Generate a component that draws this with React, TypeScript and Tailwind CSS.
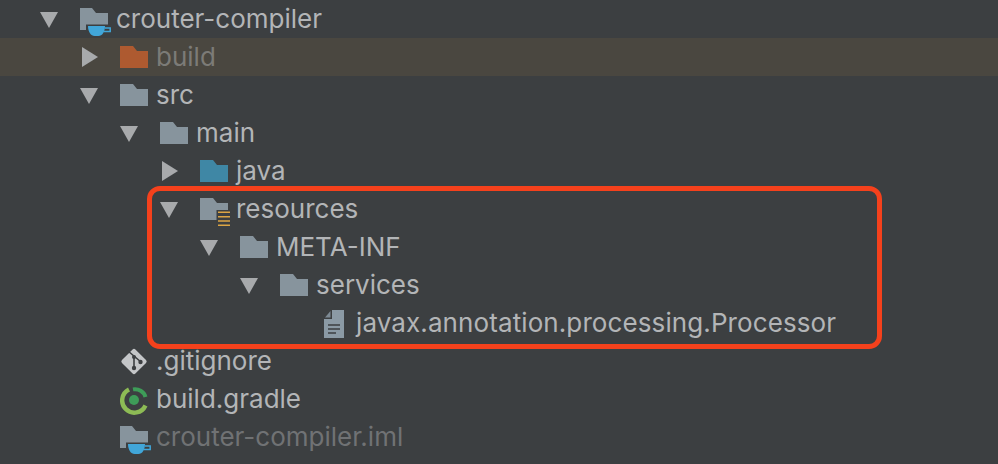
import React from "react";

const Arrow = ({ open }: { open: boolean }) => (
  <svg width="20" height="20" viewBox="0 0 20 20" className="shrink-0">
    {open ? (
      <polygon points="0,3 18,3 9,19" fill="#a8aaac" />
    ) : (
      <polygon points="2,0 18,10 2,20" fill="#a8aaac" />
    )}
  </svg>
);

const Folder = ({ color = "#87949d" }: { color?: string }) => (
  <svg width="28" height="22" viewBox="0 0 28 22" className="shrink-0">
    <path d="M0 0H13L17 5H28V22H0Z" fill={color} />
  </svg>
);

const ModuleFolder = () => (
  <svg width="32" height="28" viewBox="0 0 32 28" className="shrink-0">
    <path d="M0 0H12L16 5H28V22H0Z" fill="#87949d" />
    <path d="M6 16.5H32V28H6Z" fill="#3c3f41" />
    <path d="M8 18H25C25 24 22 28 18.5 28H14.5C11 28 8 24 8 18Z" fill="#41a6d9" />
    <path d="M25 20H30.2V23.5H23.5" fill="none" stroke="#41a6d9" strokeWidth="1.5" />
  </svg>
);

const ResourceFolder = () => (
  <svg width="32" height="28" viewBox="0 0 32 28" className="shrink-0">
    <path d="M0 0H13L17 5H28V22H0Z" fill="#87949d" />
    <path d="M16.5 12H31V28H16.5Z" fill="#3c3f41" />
    <path d="M18 14.3H30M18 18.7H30M18 23H30M18 27.3H30" stroke="#dca544" strokeWidth="1.6" />
  </svg>
);

const FileIcon = () => (
  <svg width="20" height="28" viewBox="0 0 20 28" className="shrink-0">
    <path d="M8 0H20V28H0V9H8Z" fill="#8b9aa5" />
    <path d="M6.5 1V7.5H1Z" fill="#7d8a94" />
    <path d="M4 15H16M4 19H16M4 23H12" stroke="#3c3f41" strokeWidth="1.6" />
  </svg>
);

const GitIcon = () => (
  <svg width="28" height="30" viewBox="0 0 28 30" className="shrink-0">
    <rect x="4.5" y="5" width="19" height="19" rx="2" transform="rotate(45 14 14.5)" fill="#c4c6c8" />
    <path d="M8 4L21 15M14 10V21" stroke="#3c3f41" strokeWidth="1.6" fill="none" />
    <circle cx="14" cy="10" r="2" fill="#3c3f41" />
    <circle cx="14" cy="21" r="2.2" fill="#3c3f41" />
    <circle cx="20.5" cy="15" r="2.2" fill="#3c3f41" />
  </svg>
);

const GradleIcon = () => (
  <svg width="28" height="30" viewBox="0 0 28 30" className="shrink-0">
    <path d="M9 4.5A12.2 12.2 0 1 0 25.5 20.5" fill="none" stroke="#8dbb55" strokeWidth="4.4" />
    <path d="M13 4.4A11 11 0 0 1 25.5 12" fill="none" stroke="#3e9c58" strokeWidth="4" />
    <circle cx="14" cy="15" r="5" fill="#3e9c58" />
  </svg>
);

type Row = {
  label: string;
  pad: string;
  arrow?: "open" | "closed";
  icon: React.ReactNode;
  slot: string;
  text: string;
  bg?: string;
};

const textColor = "text-[#b3b5b7]";

const rows: Row[] = [
  { label: "crouter-compiler", pad: "pl-[40px] gap-[20px]", arrow: "open", icon: <ModuleFolder />, slot: "w-[28px] pt-[3px]", text: textColor },
  { label: "build", pad: "pl-[80px] gap-[20px]", arrow: "closed", icon: <Folder color="#ae5a30" />, slot: "w-[28px] pt-[3px]", text: "text-[#7c7b77]", bg: "bg-[#4a4740]" },
  { label: "src", pad: "pl-[80px] gap-[20px]", arrow: "open", icon: <Folder />, slot: "w-[28px] pt-[3px]", text: textColor },
  { label: "main", pad: "pl-[120px] gap-[20px]", arrow: "open", icon: <Folder />, slot: "w-[28px] pt-[3px]", text: textColor },
  { label: "java", pad: "pl-[160px] gap-[20px]", arrow: "closed", icon: <Folder color="#3f87a5" />, slot: "w-[28px] pt-[3px]", text: textColor },
  { label: "resources", pad: "pl-[160px] gap-[20px]", arrow: "open", icon: <ResourceFolder />, slot: "w-[28px] pt-[3px]", text: textColor },
  { label: "META-INF", pad: "pl-[200px] gap-[20px]", arrow: "open", icon: <Folder />, slot: "w-[28px] pt-[3px]", text: textColor },
  { label: "services", pad: "pl-[240px] gap-[20px]", arrow: "open", icon: <Folder />, slot: "w-[28px] pt-[3px]", text: textColor },
  { label: "javax.annotation.processing.Processor", pad: "pl-[324px]", icon: <FileIcon />, slot: "w-[24px] pt-[1px]", text: `tracking-[0.1px] ${textColor}` },
  { label: ".gitignore", pad: "pl-[120px]", icon: <GitIcon />, slot: "w-[28px]", text: textColor },
  { label: "build.gradle", pad: "pl-[120px]", icon: <GradleIcon />, slot: "w-[28px]", text: textColor },
  { label: "crouter-compiler.iml", pad: "pl-[120px]", icon: <ModuleFolder />, slot: "w-[28px] pt-[3px]", text: "text-[#707274]" },
];

export default function App() {
  return (
    <div className="relative h-[464px] w-[998px] overflow-hidden bg-[#3c3f41] font-['Inter',sans-serif] text-[26px]">
      {rows.map((r) => (
        <div key={r.label} className={`flex h-[38px] items-center ${r.pad} ${r.bg ?? ""}`}>
          {r.arrow && <Arrow open={r.arrow === "open"} />}
          <div className="flex items-center gap-[8px]">
            <div className={`h-[28px] ${r.slot}`}>{r.icon}</div>
            <span className={`pb-[2px] ${r.text}`}>{r.label}</span>
          </div>
        </div>
      ))}
      {/* red annotation box */}
      <div className="absolute left-[147px] top-[186px] h-[163px] w-[735px] rounded-[13px] border-[5px] border-[#f5411c]" />
    </div>
  );
}
